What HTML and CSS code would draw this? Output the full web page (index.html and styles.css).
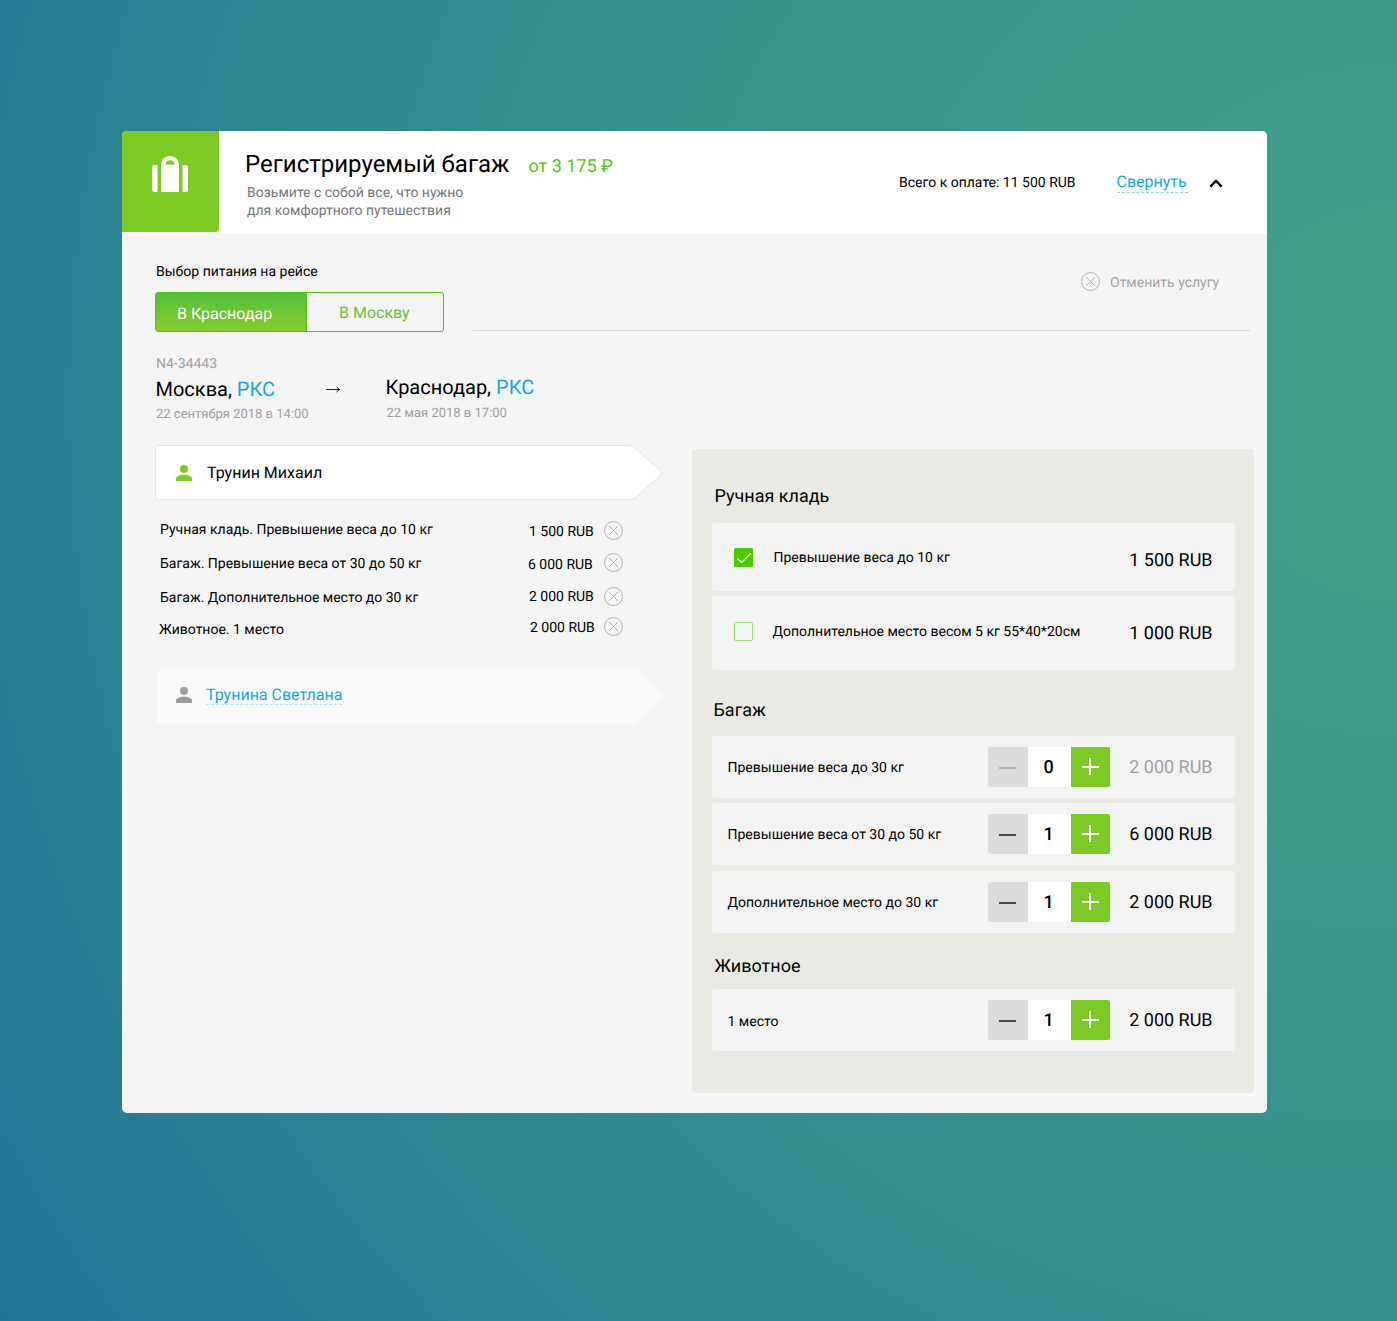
FILE: index.html
```html
<!DOCTYPE html>
<html lang="ru">
<head>
<meta charset="utf-8">
<title>Регистрируемый багаж</title>
<link rel="stylesheet" href="styles.css">
</head>
<body>
<svg class="defs" aria-hidden="true">
  <symbol id="remove" viewBox="0 0 20 20"><circle cx="10.5" cy="9.500" r="9" /><path d="M6 5l9 9M15 5l-9 9" /></symbol>
  <symbol id="person" viewBox="0 0 16 16"><circle cx="8" cy="4" r="4" /><path d="M0 16v-2.4C0 11 4.6 9.8 8 9.8s8 1.2 8 3.8V16z" /></symbol>
</svg>
<main class="card">
  <header class="head">
    <div class="tile">
      <svg width="36" height="37" viewBox="0 0 36 37"><path fill="#fff" fill-rule="evenodd" d="M0 11.5Q0 9 2.5 9H5.500V36H2.500Q0 36 0 33.500ZM30.500 9H33.500Q36 9 36 11.500V33.500Q36 36 33.500 36H30.500ZM9 36V9.500C9 4 12.500 0 18 0S27 4 27 9.500V36ZM13.500 8.500H22.500C22.500 6 20.500 4.300 18 4.300S13.500 6 13.500 8.500Z"/></svg>
    </div>
    <div class="intro">
      <div class="title-row"><h1 class="title">Регистрируемый багаж</h1><span class="from">от 3 175 ₽</span></div>
      <p class="sub">Возьмите с собой все, что нужно<br>для комфортного путешествия</p>
    </div>
    <div class="total">Всего к оплате: 11 500 RUB</div>
    <a class="collapse">Свернуть</a>
    <svg class="chevron" width="14" height="9" viewBox="0 0 14 9"><path d="M1.300 7.600L7 2l5.700 5.600" fill="none" stroke="#000" stroke-width="2.400"/></svg>
  </header>
  <section class="body">
    <div class="choice">
      <div class="choice-left">
        <div class="caption">Выбор питания на рейсе</div>
        <div class="tabs"><div class="tab active">В Краснодар</div><div class="tab">В Москву</div></div>
      </div>
      <div class="cancel-area"><div class="cancel"><svg class="x" width="20" height="20"><use href="#remove"/></svg><span>Отменить услугу</span></div></div>
    </div>
    <div class="route">
      <div class="from-city">
        <div class="flight">N4-34443</div>
        <div class="city">Москва, <span class="code">РКС</span></div>
        <div class="date">22 сентября 2018 в 14:00</div>
      </div>
      <svg class="arrow" width="16" height="9" viewBox="0 0 16 9"><path d="M0 4.500h13" stroke="#222" fill="none"/><path d="M10.500 2l3 2.500-3 2.500" stroke="#222" fill="none"/></svg>
      <div class="to-city">
        <div class="city">Краснодар, <span class="code">РКС</span></div>
        <div class="date">22 мая 2018 в 17:00</div>
      </div>
    </div>
    <div class="columns">
      <div class="people">
        <div class="person">
          <svg class="shape" width="508" height="56" viewBox="0 0 508 56"><path d="M4 .5H474Q477 .5 480 3L506 26.500Q507.500 28 506 29.500L480 53Q478 54.500 476 54.500H4Q.5 54.500 .5 51V4Q.5 .5 4 .5Z" fill="#fff" stroke="#e6e6e6"/></svg>
          <svg class="avatar green" width="16" height="16"><use href="#person"/></svg><span class="name">Трунин Михаил</span>
        </div>
        <div class="services">
          <div class="service r1"><span class="what">Ручная кладь. Превышение веса до 10 кг</span><span class="cost">1 500 RUB</span><svg class="x" width="20" height="20"><use href="#remove"/></svg></div>
          <div class="service r2"><span class="what">Багаж. Превышение веса от 30 до 50 кг</span><span class="cost">6 000 RUB</span><svg class="x" width="20" height="20"><use href="#remove"/></svg></div>
          <div class="service r3"><span class="what">Багаж. Дополнительное место до 30 кг</span><span class="cost">2 000 RUB</span><svg class="x" width="20" height="20"><use href="#remove"/></svg></div>
          <div class="service r4"><span class="what">Животное. 1 место</span><span class="cost">2 000 RUB</span><svg class="x" width="20" height="20"><use href="#remove"/></svg></div>
        </div>
        <div class="person second">
          <svg class="shape" width="508" height="56" viewBox="0 0 508 56"><path d="M4 0H475Q478 0 481 2.500L507 27L481 52.500Q478 55 475 55H4Q0 55 0 51V4Q0 0 4 0Z" fill="#fafafa"/></svg>
          <svg class="avatar" width="16" height="16"><use href="#person"/></svg><a class="name link">Трунина Светлана</a>
        </div>
      </div>
      <div class="panel">
        <h2 class="group g1">Ручная кладь</h2>
        <div class="option check"><svg class="box" width="20" height="20" viewBox="0 0 20 20"><rect width="19" height="19" rx="1.500" fill="#4bca00"/><path d="M3.200 10.300l4.300 4.200L17 5.200" fill="none" stroke="#fff" stroke-width="1.300"/></svg><span class="label">Превышение веса до 10 кг</span><span class="price">1 500 RUB</span></div>
        <div class="option check tall"><svg class="box" width="20" height="20" viewBox="0 0 20 20"><rect x=".5" y=".5" width="18" height="18" rx="1" fill="none" stroke="#92df6b"/></svg><span class="label">Дополнительное место весом 5 кг 55*40*20см</span><span class="price">1 000 RUB</span></div>
        <h2 class="group g2">Багаж</h2>
        <div class="option"><span class="label">Превышение веса до 30 кг</span><div class="stepper"><span class="minus off"></span><span class="count">0</span><span class="plus"></span></div><span class="price off">2 000 RUB</span></div>
        <div class="option"><span class="label">Превышение веса от 30 до 50 кг</span><div class="stepper"><span class="minus"></span><span class="count">1</span><span class="plus"></span></div><span class="price">6 000 RUB</span></div>
        <div class="option last"><span class="label">Дополнительное место до 30 кг</span><div class="stepper"><span class="minus"></span><span class="count">1</span><span class="plus"></span></div><span class="price">2 000 RUB</span></div>
        <h2 class="group g3">Животное</h2>
        <div class="option pet"><span class="label">1 место</span><div class="stepper"><span class="minus"></span><span class="count">1</span><span class="plus"></span></div><span class="price">2 000 RUB</span></div>
      </div>
    </div>
  </section>
</main>
</body>
</html>
```
FILE: styles.css
```css
* { box-sizing: border-box; }
body {
  margin: 0;
  padding: 131px 130px 0 122px;
  height: 1321px;
  font: 14px/20px Roboto, "Liberation Sans", sans-serif;
  text-rendering: geometricPrecision;
  color: #000;
  background: radial-gradient(circle at 1397px 400px, #41a088 0, #3c9888 520px, #2b8294 1320px, #237597 1700px);
}
h1, h2, p { margin: 0; font-weight: 400; }
svg { display: block; flex: none; }
span, a, h1, h2, .label, .total, .city { white-space: nowrap; }
.defs { width: 0; height: 0; position: absolute; }
.card { width: 1145px; height: 982px; border-radius: 5px; background: #f5f5f5; overflow: hidden; }

.head { display: flex; height: 103px; background: #fff; }
.tile { width: 97px; height: 101px; padding: 25px 0 0 30px; background: #7eca25; border-radius: 0 0 3px 0; }
.intro { width: 558px; padding: 18px 0 0 26px; }
.title-row { display: flex; height: 30px; }
.title { width: 283.5px; font-size: 24px; line-height: 30px; }
.from { padding-top: 3px; font-size: 18px; line-height: 30px; color: #4bca0d; }
.sub { padding: 5px 0 0 2px; line-height: 18px; color: #777; }
.total { width: 217.5px; margin-left: 122px; padding-top: 42px; }
.collapse { height: 22px; margin-top: 40px; margin-right: 21.5px; width: 71px; font-size: 16px; line-height: 22px; border-bottom: 1px dashed #8fd3f3; color: #11a8ea; }
.chevron { margin-top: 48px; }

.body { padding: 26px 13px 0 33px; }
.choice { display: flex; justify-content: space-between; height: 71px; }
.caption { height: 32px; padding: 2px 0 0 1px; }
.tabs { display: flex; width: 289px; height: 40px; border: 1px solid #4fc90c; border-radius: 3px; font-size: 16px; line-height: 39px; }
.tab { flex: 1; padding-left: 32px; color: #62c43c; }
.tab.active { flex: 0 0 151px; padding: 1px 0 0 21px; color: #fff; border-right: 1px solid #4fc90c; background: linear-gradient(#58be3f, #86cc2a); }
.cancel-area { width: 777px; margin-right: 4px; border-bottom: 1px solid #d9d9d9; }
.cancel { display: flex; padding: 12px 0 0 607px; color: #a3a3a3; }
.cancel span { padding: 1px 0 0 10px; }
.x { fill: none; stroke: #b6b6b6; }

.route { display: flex; height: 114px; padding-top: 22px; }
.from-city { width: 171px; }
.flight { height: 21px; padding: 1px 0 0 1px; color: #a0a0a0; }
.city { font-size: 20px; line-height: 30px; }
.from-city .city { padding-left: .5px; }
.code { color: #11a8ea; }
.date { padding: 1px 0 0 1px; font-size: 13px; color: #a0a0a0; }
.arrow { margin-top: 32px; margin-right: 43px; }
.to-city { padding: 19px 0 0 .5px; }
.to-city .date { padding-top: 2px; }

.columns { display: flex; justify-content: space-between; }
.people { width: 510px; }
.person { display: flex; height: 55px; padding: 0 0 0 20px; }
.shape { margin-left: -20px; margin-right: -487px; }
.avatar { margin-top: 20px; margin-right: 15px; fill: #9c9c9c; }
.avatar.green { fill: #7eca25; }
.name { padding-top: 18px; font-size: 16px; }
.services { padding: 20px 0 0 4px; height: 169px; }
.service { display: flex; height: 33px; }
.what { width: 370px; padding-left: 1px; }
.cost { width: 74px; margin-top: 1px; }
.r1 .x, .r2 .what { margin-top: 1px; }
.r1 .cost, .r2 .cost { margin-top: 2px; }
.r2 .cost { margin-left: -1px; width: 75px; }
.r3 { height: 31px; }
.r3 .x { margin-top: 1px; }
.r3 .what { margin-top: 2px; }
.r4 .what { margin-top: 3px; padding-left: 0; }
.r4 .cost { margin-left: 1px; width: 73px; }
.second { margin-left: 2px; padding-left: 18px; }
.second .shape { margin-left: -18px; margin-right: -489px; }
.second .avatar { margin-top: 18px; margin-right: 14px; }
.link { height: 21px; margin-top: 15px; padding-top: 0; line-height: 22px; border-bottom: 1px dashed #b5e6fa; color: #11a8ea; }

.panel { width: 562px; height: 644px; margin-top: 4px; padding: 36px 19px 0 20px; border-radius: 3px; background: #e9eae4; }
.group { font-size: 18px; line-height: 20px; padding: 2px 0 0 2.5px; }
.g1 { height: 38px; }
.g2 { height: 37px; padding-left: 1.5px; }
.g3 { height: 34px; }
.option { display: flex; height: 62px; margin-bottom: 5px; padding-left: 15px; border-radius: 3px; background: #f3f3f3; }
.option + .last { margin-top: 6px; margin-bottom: 22px; }
.label { width: 261px; padding: 22px 0 0 .5px; }
.price { padding: 22px 0 0 19.2px; font-size: 18px; }
.price.off { color: #a0a0a0; }
.check { height: 68px; padding-left: 22px; }
.check .box { margin-top: 25px; }
.check .label { width: 356px; padding: 25px 0 0 19.5px; }
.check .price { padding: 28px 0 0 19.2px; }
.tall { height: 74px; margin-bottom: 29px; }
.tall .box { margin-top: 26px; }
.tall .label { padding: 26px 0 0 18.5px; }
.pet .label { padding-top: 23px; }
.stepper { display: flex; width: 122px; height: 40px; margin-top: 11px; border-radius: 2px; overflow: hidden; background: #fff; }
.minus, .plus { width: 40px; background: #dcdcdc; }
.minus::before { content: ""; display: block; width: 17px; height: 2px; margin: 20px 0 0 11px; background: #4d4d4d; }
.minus.off::before { background: #b2b2b2; }
.count { width: 43px; padding-left: 1px; font-size: 18px; font-weight: 500; line-height: 42px; text-align: center; padding-right: 3px; }
.plus { width: 39px; background: linear-gradient(#fff, #fff) 11px 19px / 17px 2px no-repeat, linear-gradient(#fff, #fff) 18px 11px / 2px 17px no-repeat, #7eca25; }
```
